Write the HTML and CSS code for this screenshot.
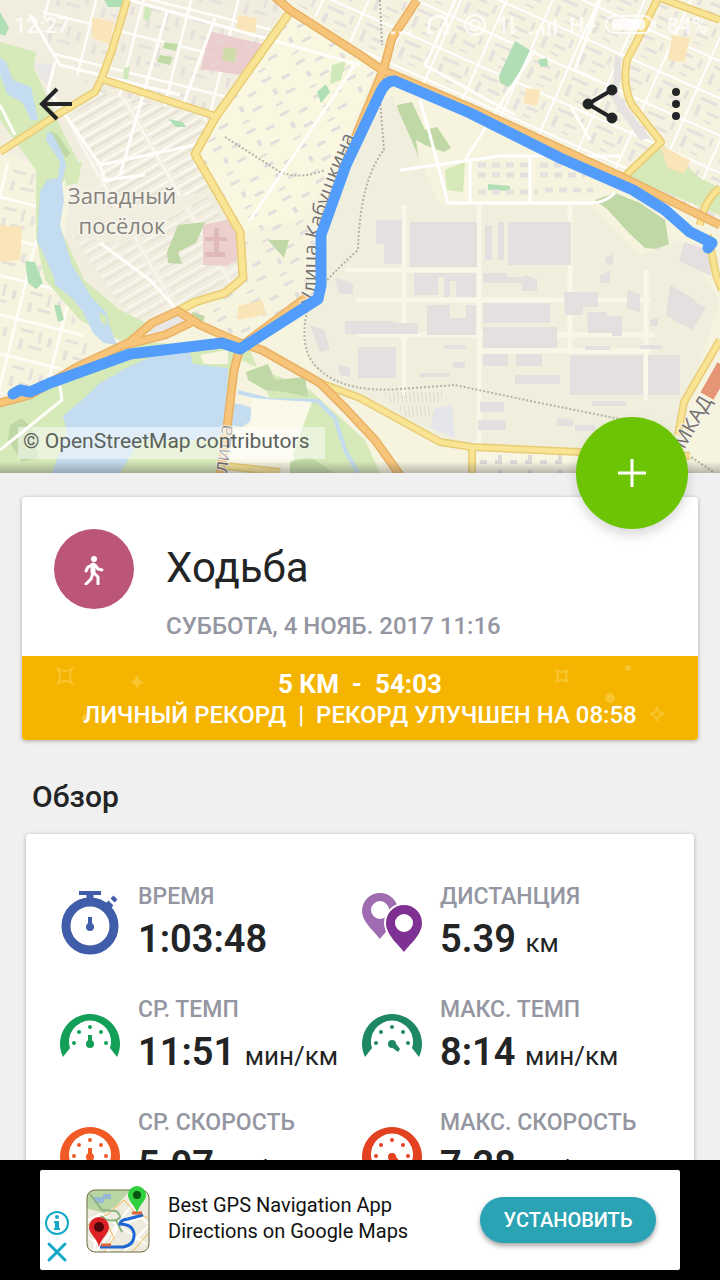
FILE: index.html
```html
<!DOCTYPE html>
<html lang="ru">
<head>
  <meta charset="UTF-8">
  <meta name="viewport" content="width=device-width, initial-scale=1.0">
  <title>Ходьба</title>
  <link rel="stylesheet" href="styles.css">
</head>
<body>
<main class="screen">
  <!-- Map with route -->
  <section class="map">
    <svg class="map-canvas" viewBox="0 0 720 473" preserveAspectRatio="xMidYMid slice" role="img" aria-label="Маршрут на карте">
      <defs>
        <pattern id="blocks" width="46" height="38" patternUnits="userSpaceOnUse" patternTransform="rotate(14)">
          <path d="M0 1H46M1 0V38" stroke="#fffefa" stroke-width="3"/>
          <path d="M8 9h13v3h-13zM27 8h3v12h-3zM9 20h4v10h-4zM19 24h14v3h-14zM37 12h4v9h-4z" fill="#e6e1da"/>
        </pattern>
        <pattern id="houses" width="38" height="38" patternUnits="userSpaceOnUse" patternTransform="rotate(-28)">
          <path d="M3 4h10v3h-10zM22 10h9v3h-9zM8 17h4v6h-4zM19 25h10v3h-10zM4 32h8v2h-8z" fill="#e2dedd"/>
        </pattern>
        <pattern id="rows" width="60" height="10" patternUnits="userSpaceOnUse" patternTransform="rotate(-30)">
          <path d="M0 1H56M58 0V10" stroke="#fbfaf4" stroke-width="2"/>
          <path d="M3 5H54" stroke="#e4e0d3" stroke-width="2"/>
        </pattern>
        <pattern id="east" width="42" height="34" patternUnits="userSpaceOnUse" patternTransform="rotate(24)">
          <path d="M0 1H42M1 0V34" stroke="#fff" stroke-width="2"/>
          <path d="M8 7h18v3h-18zM8 15h4v12h-4zM20 18h13v3h-13zM34 7h3v9h-3zM20 27h8v2h-8z" fill="#e5e1dd"/>
        </pattern>
        <linearGradient id="fade" x1="0" y1="0" x2="0" y2="1">
          <stop offset="0" stop-color="#444" stop-opacity="0"/>
          <stop offset="1" stop-color="#444" stop-opacity=".35"/>
        </linearGradient>
      </defs>

      <rect width="720" height="473" fill="#f6f4df"/>
      <path d="M0 0H290L195 154L240 232L243 278L178 311L125 345L60 300L70 180L0 150z" fill="#f1eee0"/>
      <path d="M40 0H288L215 116L96 92L50 50z" fill="url(#blocks)"/>
      <path d="M68 120L97 92L214 118L196 155L215 190L110 208z" fill="url(#rows)"/>
      <path d="M72 235L120 245L205 195L236 235L240 280L175 305L135 325z" fill="url(#rows)" opacity=".7"/>
      <path d="M290 14L375 70L330 175L300 220L245 232L197 154z" fill="#f9f7e0"/>
      <path d="M290 14L375 70L330 175L300 220L245 232L197 154z" fill="url(#houses)"/>
      <path d="M0 160L38 175L36 240L100 370L0 395z" fill="url(#blocks)"/>
      <path d="M292 0H720V220L620 175L385 66z" fill="#f5f2df"/>
      <path d="M292 0H720V220L620 175L385 66z" fill="url(#east)"/>
      <path d="M245 235L315 210L315 295L245 340L180 312L240 285z" fill="url(#houses)"/>

      <!-- Parks -->
      <g fill="#d5e9b9">
        <path d="M0 42L36 52L34 68L62 130L80 165L60 185L50 210L66 240L84 280L120 310L150 325L130 345L75 372L0 400V473H220L228 430L240 360L310 390L365 440L380 473H300L250 350L120 340L80 320L45 280L36 238L36 170L0 120z"/>
        <path d="M660 142L700 178L720 188V215L628 177z"/>
        <path d="M64 165L82 162L78 183L66 186zM445 170L465 162L463 192L447 190z"/>
      </g>
      <g fill="#bfd8a5">
        <path d="M397 105L412 102L425 130L437 127L451 148L444 152L425 145L416 140L420 166L405 168z"/>
        <path d="M178 225L205 222L196 243L178 252L182 264L168 263L167 252zM268 240L289 240L284 258z"/>
        <path d="M246 372L268 364L275 380L305 377L308 397L285 392L265 390L248 380z"/>
        <path d="M595 200L615 193L640 203L665 220L670 250L645 248L628 232L608 210z"/>
        <path d="M10 425L22 418L35 432L38 458L22 462L8 440zM290 462L310 457L335 473H290z"/>
        <path d="M50 130L58 135L70 153L66 158L56 145zM192 312L205 316L202 325L192 322z"/>
      </g>
      <g fill="#b0deb5">
        <path d="M104 0H126V7L108 7zM0 12L9 28L5 36L0 34z"/>
        <path d="M515 41L530 50L515 82L508 87L500 83L499 76z"/>
        <path d="M25 261L35 262L43 283L36 289L28 283zM317 92L326 84L330 92L321 103zM168 119L183 122L186 127L176 127zM54 305L60 305L64 320L58 322zM538 60L547 58L548 66L541 67zM488 184L510 186V191L488 190z"/>
      </g>
      <g fill="#bfdba3">
        <path d="M165 42L178 44L176 51L163 48zM160 55L173 57L170 65L157 62z"/>
      </g>
      <path d="M332 65L346 61L341 80L330 84zM145 6L152 10L148 22L143 18zM124 68L130 66L128 79L123 79z" fill="#cfe9b8"/>
      <path d="M92 17L114 22L110 44L92 38zM238 15L257 18L255 33L236 30zM672 35L690 38L684 62L668 60zM0 225L22 227L20 260L0 262zM238 306L262 300L266 314L238 320zM660 145L690 160L684 174L668 168zM526 88L540 90L537 106L524 103z" fill="#fae5b8"/>
      <path d="M209 31L262 44L247 76L201 69z" fill="#eccdcd"/>
      <path d="M209 31L262 44L247 76L201 69z" fill="url(#houses)" opacity=".4"/>
      <path d="M224 47L237 49L235 63L222 60z" fill="#cfdca9"/>
      <path d="M203 225L238 217L238 260L226 266L203 265z" fill="#ecd0cd"/>
      <path d="M205 237h22v4h-22zM214 228h5v27h-5zM205 252h20v5h-20z" fill="#e0babb"/>
      <path d="M34 63L52 64L50 85L40 78zM148 325L180 312L188 322L150 335z" fill="#e9e6e6"/>
      <path d="M615 55L622 58L618 95L650 138L640 140L612 100z" fill="#e6e2e2"/>

      <!-- Water -->
      <g fill="#c3dcf0">
        <path d="M0 58L6 62L13 80L31 87L38 120H31L23 103L7 94L0 74z"/>
        <path d="M47 132L52 133L62 152L66 165L62 183L64 200L60 225L72 265L92 298L106 312L109 325L117 345L104 343L93 333L82 310L72 298L55 285L54 277L37 240L40 192L47 180L58 178L60 162L46 140z"/>
        <path d="M130 366L152 357L190 352L193 364L228 368L225 430L214 440H140L120 473H52L67 432L63 416L82 400L100 383z"/>
        <path d="M240 404L252 408V420L242 427L228 425V403z"/>
      </g>
      <path d="M238 392L270 400L318 401L335 418L345 450L358 473" fill="none" stroke="#c3dcf0" stroke-width="4"/>
      <path d="M99 313L106 316L107 326L101 322z" fill="#d5e9b9"/>
      <path d="M200 355L228 350V364H204z" fill="#f8f6e3"/>
      <path d="M252 398L312 402L298 440L290 463H230L235 430L250 425z" fill="#faf8e8"/>

      <!-- Industrial zone -->
      <path d="M378 100L392 96L440 205L590 205L640 255L680 240L720 300L690 400L678 450L472 445L440 440L360 397L318 375L305 345L308 305L325 285L330 215z" fill="#f0efdd"/>
      <path d="M404 205V395M479 205V470M356 300H650M358 335H655M480 351H650M646 270V400M345 270H480M570 205V350" stroke="#f8f8e9" stroke-width="5" fill="none"/>
      <g fill="#e3e0df">
        <path d="M410 222h67v45h-67zM508 222h63v43h-63zM376 220h26v44h-18v-20h-8zM485 225h7v35h-7zM498 222h6v38h-6z"/>
        <path d="M414 273h62v24h-20v-16h-6v16h-6v-20h-6v18h-24zM427 305h23v13h16v-13h10v30h-49zM483 273h24v4h18v-2l12 4v12h-15v-8h-39zM483 303h67v20h-67zM483 327h74v21h-74z"/>
        <path d="M345 321h45l8 2h20v11h-73zM358 347h38v31h-38zM483 354h25v12h8v-12h26v12h-59zM515 375h45v9h-45zM570 355h73v40h-73zM648 355h32v40h-32z"/>
        <path d="M564 292h34v15h-15v8h-18zM587 312h20v4h15v20h-10v-3h-24zM640 345h22v4h-22zM585 346h25v4h-25zM592 401h34v5h-34zM684 242l25 8 2 26-32-15zM670 285l14 8 12 8-14 24-16-10zM692 300l14 8-14 22-12-8z"/>
        <path d="M480 402h24v10h-24zM478 420h28v10h-28zM444 345h22v4h-22zM420 373h30v4h-30zM453 362h12v6h-12zM335 278l10 2 8 4v10h-14zM310 325l14 5 6 20-10 2zM338 365l12 2v10l-10-2zM557 417l16 3v6h-16zM575 425h20v6h-20zM605 258l8-4v10l-6 2zM600 275l10-4v12h-9zM628 290l12 4v18l-14-4zM650 320l8-2v8h-8z"/>
      </g>
      <path d="M435 408L452 405L455 438L430 428z" fill="#e5e6ea"/>
      <path d="M385 395h60M390 400h50M400 408h30M405 414h30" stroke="#dfdece" stroke-width="6" stroke-dasharray="1 3"/>
      <path d="M478 452H690V473H478z" fill="#f8f6e3"/>
      <path d="M480 462h90M500 455v18M530 455v18M560 455v18" stroke="#dddada" stroke-width="4" stroke-dasharray="7 8"/>
      <path d="M400 170L500 156H620M430 135L448 203H590Q605 203 615 193M470 158V203M530 155V203M430 135L420 100" fill="none" stroke="#fff" stroke-width="3"/>
      <path d="M478 165h55M478 175h55M540 165h60M540 175h45M478 192h60M545 190h48" stroke="#e4e0dd" stroke-width="5" stroke-dasharray="8 6"/>

      <!-- Railways and minor streets -->
      <g fill="none" stroke="#b4b2a8" stroke-width="2" stroke-dasharray="2 2">
        <path d="M225 137L280 172Q300 180 325 170M380 100L384 150Q360 180 358 250Q330 275 310 300Q295 350 320 370Q345 393 400 389L455 385L540 403L625 420M688 455L715 473M380 0L382 45"/>
      </g>
      <g fill="none" stroke="#fffefa" stroke-width="3">
        <path d="M30 15L60 65L180 95M55 62L48 90L100 165L105 180L145 175M130 0L360 65M215 18L183 105M167 12L120 175M355 65L250 220M100 165L195 145M0 105L15 135M100 243L150 280L178 311M60 386L62 400L0 450M455 0L425 65L515 115M535 50L465 160M600 0L575 70L640 100M590 140L570 105"/>
      </g>

      <!-- Main roads -->
      <g fill="none" stroke-linejoin="round">
        <g stroke="#e8cc76" stroke-width="8">
          <path d="M127 0L112 50L101 80L95 92L60 113L0 152M102 79L215 116"/>
          <path d="M290 12L215 118L195 154L240 232L243 278L225 293L195 302L178 311" stroke-width="9"/>
          <path d="M320 383L360 398L440 442L472 447L580 452L690 456M472 447V473"/>
          <path d="M657 0L640 35L627 60Q622 85 632 105L661 142L625 176M660 -2L720 20M720 188Q704 200 700 225M708 235L716 275L722 290M720 340L684 402L678 435M225 466L280 472"/>
        </g>
        <g stroke="#f9e494" stroke-width="5">
          <path d="M127 0L112 50L101 80L95 92L60 113L0 152M102 79L215 116"/>
          <path d="M290 12L215 118L195 154L240 232L243 278L225 293L195 302L178 311" stroke-width="6"/>
          <path d="M320 383L360 398L440 442L472 447L580 452L690 456M472 447V473"/>
          <path d="M657 0L640 35L627 60Q622 85 632 105L661 142L625 176M660 -2L720 20M720 188Q704 200 700 225M708 235L716 275L722 290M720 340L684 402L678 435M225 466L280 472"/>
        </g>
        <g stroke="#e9b164" stroke-width="9">
          <path d="M273 -5L290 10L360 55L382 70L480 112L620 176L720 225M417 0L392 38L384 68L350 150L322 225M-4 404L30 395L75 368L130 342L152 323L178 311L200 325L240 343L262 350L320 383L345 408L375 440L400 475M125 345L165 335L192 322M308 296L240 347L234 370L228 420L220 475"/>
        </g>
        <g stroke="#f7c57a" stroke-width="6">
          <path d="M273 -5L290 10L360 55L382 70L480 112L620 176L720 225M417 0L392 38L384 68L350 150L322 225M-4 404L30 395L75 368L130 342L152 323L178 311L200 325L240 343L262 350L320 383L345 408L375 440L400 475M125 345L165 335L192 322M308 296L240 347L234 370L228 420L220 475"/>
        </g>
        <path d="M724 366L707 396" stroke="#e69677" stroke-width="15"/>
      </g>

      <!-- Place names -->
      <path id="street" d="M315 305C318 280 315 255 320 234C327 205 342 165 362 122" fill="none"/>
      <path id="street-south" d="M227 473L234 418" fill="none"/>
      <g class="map-label">
        <text x="122" y="204" text-anchor="middle">Западный</text>
        <text x="122" y="234" text-anchor="middle">посёлок</text>
      </g>
      <g class="map-street">
        <text><textPath href="#street">Улица Кабушкина</textPath></text>
        <text><textPath href="#street-south">лица</textPath></text>
        <text transform="translate(684 450) rotate(-60)">МКАД</text>
      </g>

      <path d="M13 394L20 390L30 392L50 383L130 354L222 343L240 349L318 299L321 285V235L346 165L380 93Q386 80 395 81L470 113L560 158L633 190L665 210L690 232L712 243L708 248" fill="none" stroke="#529dfb" stroke-width="11" stroke-linejoin="round" stroke-linecap="round"/>
      <rect y="461" width="720" height="12" fill="url(#fade)"/>
    </svg>

    <div class="status-bar">
      <span>12:27</span>
      <span class="status-icons">
        <svg width="172" height="24" viewBox="0 0 172 24" fill="none" stroke="#fff" stroke-width="3" aria-hidden="true">
          <path d="M2 20h4M10 20h4M18 20h4"/>
          <path d="M40 20V12a9 9 0 0 1 18 0V20M38 20h6M54 20h6"/>
          <circle cx="86" cy="12" r="10" stroke-width="2"/>
          <circle cx="86" cy="12" r="5" stroke-width="2"/>
          <path d="M115 4V21M123 3V21M110 9l5-5M128 16l-5 5" stroke-width="2"/>
          <path d="M142 22V19M148 22V17M154 22V14M160 22V10M166 22V6"/>
        </svg>
        <span>H+</span>
        <svg width="54" height="20" viewBox="0 0 54 20" aria-hidden="true">
          <rect x="1" y="1" width="46" height="17" rx="8" fill="none" stroke="#fff" stroke-width="2"/>
          <rect x="7" y="4" width="33" height="11" rx="4" fill="#fff"/>
          <path d="M50 6v8" stroke="#fff" stroke-width="2"/>
        </svg>
        <span>84%</span>
      </span>
    </div>

    <nav class="toolbar">
      <button class="icon-btn" aria-label="Назад">
        <svg width="36" height="36" viewBox="0 0 36 36" fill="none" stroke="#222425" stroke-width="4">
          <path d="M34 18H5M19 3L4 18L19 33"/>
        </svg>
      </button>
      <span class="spacer"></span>
      <button class="icon-btn" aria-label="Поделиться">
        <svg width="40" height="40" viewBox="0 0 40 40" fill="#222425" stroke="#222425">
          <path d="M32 6L8 20L32 34" fill="none" stroke-width="4"/>
          <circle cx="32" cy="6" r="5"/><circle cx="8" cy="20" r="5"/><circle cx="32" cy="34" r="5"/>
        </svg>
      </button>
      <button class="icon-btn" aria-label="Ещё">
        <svg width="40" height="40" viewBox="0 0 40 40" fill="#222425">
          <circle cx="20" cy="8" r="4"/><circle cx="20" cy="20" r="4"/><circle cx="20" cy="32" r="4"/>
        </svg>
      </button>
    </nav>

    <span class="attribution">© OpenStreetMap contributors</span>

    <button class="fab" aria-label="Добавить">
      <svg width="28" height="28" viewBox="0 0 28 28" stroke="#fff" stroke-width="3">
        <path d="M0 14H28M14 0V28"/>
      </svg>
    </button>
  </section>

  <!-- Workout summary -->
  <article class="card summary">
    <div class="summary-head">
      <span class="sport">
        <svg width="32" height="32" viewBox="0 0 32 32" fill="none" stroke="#fff" stroke-width="3" stroke-linecap="round" stroke-linejoin="round" aria-hidden="true">
          <circle cx="16" cy="6" r="3" fill="#fff" stroke="none"/>
          <path d="M14 12L10 14L8 18M17 12L20 16L24 17"/>
          <path d="M15 12V19" stroke-width="5"/>
          <path d="M15 20L13 26L8 31M16 20L20 24L20 31"/>
        </svg>
      </span>
      <div>
        <h1>Ходьба</h1>
        <p class="date">СУББОТА, 4 НОЯБ. 2017 11:16</p>
      </div>
    </div>
    <div class="record">
      <svg class="sparkles" viewBox="0 0 676 84" preserveAspectRatio="none" fill="none" stroke="#fbd04f" stroke-width="2" aria-hidden="true">
        <path d="M36 13q7 4 14 0q-4 7 0 14q-7-4-14 0q4-7 0-14zM534 14q6 4 12 0q-4 6 0 12q-6-4-12 0q4-6 0-12z"/>
        <path d="M115 18q1 7 8 8q-7 1-8 8q-1-7-8-8q7-1 8-8z" fill="#fbd04f" stroke="none"/>
        <path d="M635 51q1 6 7 7q-6 1-7 7q-1-6-7-7q6-1 7-7z"/>
        <g fill="#fbd04f" stroke="none"><circle cx="588" cy="42" r="5"/><circle cx="606" cy="12" r="3"/><circle cx="64" cy="62" r="4"/></g>
      </svg>
      <strong>5 КМ&nbsp; -&nbsp; 54:03</strong>
      <span>ЛИЧНЫЙ РЕКОРД&nbsp; |&nbsp; РЕКОРД УЛУЧШЕН НА 08:58</span>
    </div>
  </article>

  <!-- Overview -->
  <h2>Обзор</h2>
  <section class="card stats">
    <div class="stat">
      <svg class="stat-icon" viewBox="0 0 64 64" fill="none" stroke="#405da9" aria-hidden="true">
        <circle cx="32" cy="35" r="24" stroke-width="9"/>
        <path d="M21 2H43" stroke-width="4"/>
        <path d="M32 1V12" stroke-width="7"/>
        <path d="M48 17L53 12" stroke-width="7"/>
        <path d="M54 6L58 10" stroke-width="4"/>
        <path d="M32 26V36" stroke-width="4"/>
        <circle cx="32" cy="36" r="4" fill="#405da9" stroke="none"/>
      </svg>
      <div>
        <div class="stat-label">ВРЕМЯ</div>
        <div class="stat-value">1:03:48</div>
      </div>
    </div>
    <div class="stat">
      <svg class="stat-icon" viewBox="0 0 64 64" fill-rule="evenodd" aria-hidden="true">
        <path d="M20 48C15 41 2 31 2 20A18 18 0 0 1 38 20C38 31 25 41 20 48zM20 10A9 9 0 1 0 20 28A9 9 0 1 0 20 10z" fill="#9f6cb1"/>
        <path d="M44 61C39 54 26 44 26 32A18 18 0 0 1 62 32C62 44 49 54 44 61z" fill="#fff" stroke="#fff" stroke-width="4"/>
        <path d="M44 61C39 54 26 44 26 32A18 18 0 0 1 62 32C62 44 49 54 44 61zM44 23A9 9 0 1 0 44 41A9 9 0 1 0 44 23z" fill="#7f3193"/>
      </svg>
      <div>
        <div class="stat-label">ДИСТАНЦИЯ</div>
        <div class="stat-value">5.39 <small>км</small></div>
      </div>
    </div>
    <div class="stat">
      <svg class="stat-icon gauge-avg-pace" viewBox="0 0 64 64" fill="currentColor" aria-hidden="true">
        <path d="M5 53A30 30 0 1 1 59 53L52 44A21 21 0 1 0 12 44z"/>
        <circle cx="16" cy="39" r="2"/><circle cx="21" cy="28" r="2"/><circle cx="32" cy="23" r="2"/><circle cx="43" cy="28" r="2"/><circle cx="48" cy="39" r="2"/>
        <circle cx="32" cy="40" r="4"/><path d="M30 31h4v9h-4z"/>
      </svg>
      <div>
        <div class="stat-label">СР. ТЕМП</div>
        <div class="stat-value">11:51 <small>мин/км</small></div>
      </div>
    </div>
    <div class="stat">
      <svg class="stat-icon gauge-max-pace" viewBox="0 0 64 64" fill="currentColor" aria-hidden="true">
        <path d="M5 53A30 30 0 1 1 59 53L52 44A21 21 0 1 0 12 44z"/>
        <circle cx="16" cy="39" r="2"/><circle cx="21" cy="28" r="2"/><circle cx="32" cy="23" r="2"/><circle cx="43" cy="28" r="2"/><circle cx="48" cy="39" r="2"/>
        <circle cx="32" cy="40" r="4"/><path d="M34 37l6 8l-2 3l-8-6z"/>
      </svg>
      <div>
        <div class="stat-label">МАКС. ТЕМП</div>
        <div class="stat-value">8:14 <small>мин/км</small></div>
      </div>
    </div>
    <div class="stat">
      <svg class="stat-icon gauge-avg-speed" viewBox="0 0 64 64" fill="currentColor" aria-hidden="true">
        <path d="M5 53A30 30 0 1 1 59 53L52 44A21 21 0 1 0 12 44z"/>
        <circle cx="16" cy="39" r="2"/><circle cx="21" cy="28" r="2"/><circle cx="32" cy="23" r="2"/><circle cx="43" cy="28" r="2"/><circle cx="48" cy="39" r="2"/>
        <circle cx="32" cy="40" r="4"/><path d="M30 31h4v9h-4z"/>
      </svg>
      <div>
        <div class="stat-label">СР. СКОРОСТЬ</div>
        <div class="stat-value">5.07 <small>км/ч</small></div>
      </div>
    </div>
    <div class="stat">
      <svg class="stat-icon gauge-max-speed" viewBox="0 0 64 64" fill="currentColor" aria-hidden="true">
        <path d="M5 53A30 30 0 1 1 59 53L52 44A21 21 0 1 0 12 44z"/>
        <circle cx="16" cy="39" r="2"/><circle cx="21" cy="28" r="2"/><circle cx="32" cy="23" r="2"/><circle cx="43" cy="28" r="2"/><circle cx="48" cy="39" r="2"/>
        <circle cx="32" cy="40" r="4"/><path d="M34 37l6 8l-2 3l-8-6z"/>
      </svg>
      <div>
        <div class="stat-label">МАКС. СКОРОСТЬ</div>
        <div class="stat-value">7.28 <small>км/ч</small></div>
      </div>
    </div>
  </section>
</main>

<!-- Ad banner -->
<aside class="ad">
  <div class="ad-body">
    <div class="ad-controls">
      <button class="icon-btn" aria-label="Об объявлении">
        <svg width="26" height="26" viewBox="0 0 26 26" fill="none" stroke="#13a9c6" stroke-width="2">
          <circle cx="13" cy="13" r="11"/>
          <circle cx="13" cy="7" r="2" fill="#13a9c6" stroke="none"/>
          <path d="M10 12H13M10 19H16" stroke-width="2"/>
          <path d="M13 11V20" stroke-width="4"/>
        </svg>
      </button>
      <button class="icon-btn" aria-label="Закрыть">
        <svg width="26" height="26" viewBox="0 0 26 26" stroke="#13a9c6" stroke-width="3" stroke-linecap="round">
          <path d="M5 5L21 21M21 5L5 21"/>
        </svg>
      </button>
    </div>
    <svg class="ad-icon" width="64" height="68" viewBox="0 0 64 68" aria-hidden="true">
      <defs>
        <clipPath id="tile"><rect x="1" y="4" width="62" height="62" rx="8"/></clipPath>
      </defs>
      <g clip-path="url(#tile)" fill="none">
        <rect width="64" height="68" fill="#eeeadd"/>
        <path d="M0 0H48L30 20L18 27L0 22z" fill="#b9d5a2"/>
        <path d="M8 11h10v6H8zM17 8h8v5h-8z" fill="#94b8d6"/>
        <path d="M0 35L15 28L60 58M10 66L45 20L62 38M20 66L32 40L60 30M38 66L62 40M0 50L25 66M12 30L8 66" stroke="#fff" stroke-width="2"/>
        <path d="M0 40L22 28L38 14L48 25L62 32M20 35L28 52L18 66M46 66L62 48" stroke="#f2b84c" stroke-width="1"/>
        <path d="M4 8L16 24L30 25Q38 32 30 34Q22 36 15 30M30 34L36 46" stroke="#8db584" stroke-width="2"/>
        <path d="M14 61H37Q49 59 48 47Q46 38 34 38Q34 34 42 33L57 29" stroke="#1c67d2" stroke-width="3"/>
        <path d="M46 27h10M15 59h10" stroke="#d9653b" stroke-width="3"/>
      </g>
      <rect x="1" y="4" width="62" height="62" rx="8" fill="none" stroke="#6d6a3c" stroke-width="1"/>
      <path d="M51 27C49 19 42 15 42 9A9 9 0 0 1 60 9C60 15 53 19 51 27z" fill="#2fd03d"/>
      <circle cx="51" cy="9" r="4" fill="#075310"/>
      <path d="M13 61C11 52 3 48 3 41A10 10 0 0 1 23 41C23 48 15 52 13 61z" fill="#dd2025"/>
      <circle cx="13" cy="41" r="5" fill="#51080b"/>
    </svg>
    <p class="ad-text">Best GPS Navigation App<br>Directions on Google Maps</p>
    <button class="install">УСТАНОВИТЬ</button>
  </div>
</aside>
</body>
</html>
```
FILE: styles.css
```css
* {
  box-sizing: border-box;
}
body {
  margin: 0;
  height: 100vh;
  display: flex;
  flex-direction: column;
  background: #f0f0f0;
  color: #222425;
  font-family: Roboto, "Noto Sans", sans-serif;
}
button {
  border: none;
  cursor: pointer;
  font-family: inherit;
}
h1, h2, p {
  margin: 0;
}
svg {
  display: block;
}
.screen {
  flex: 1;
  min-height: 0;
  overflow: hidden;
}

/* Map */
.map {
  position: relative;
}
.map-canvas {
  width: 100%;
  height: auto;
}
.map-label {
  font-family: "Open Sans", sans-serif;
  font-size: 22px;
  font-weight: 500;
  fill: #85827d;
  stroke: #f6f4ea;
  stroke-width: 3px;
  paint-order: stroke;
}
.map-street {
  font-family: "Open Sans", sans-serif;
  font-size: 20px;
  font-weight: 500;
  fill: #74706c;
  stroke: #f6f4ea;
  stroke-width: 2px;
  paint-order: stroke;
}
.status-bar {
  position: absolute;
  top: 0;
  left: 0;
  right: 0;
  height: 50px;
  padding: 0 12px 0 14px;
  display: flex;
  align-items: center;
  justify-content: space-between;
  color: #fff;
  font-size: 22px;
  font-weight: 500;
  opacity: 0.8;
}
.status-icons {
  display: flex;
  align-items: center;
  gap: 8px;
}
.toolbar {
  position: absolute;
  top: 80px;
  left: 0;
  right: 0;
  padding: 0 24px 0 38px;
  display: flex;
  align-items: center;
}
.spacer {
  flex: 1;
}
.icon-btn {
  padding: 0;
  background: none;
}
.toolbar .icon-btn {
  height: 48px;
}
.toolbar .icon-btn:last-child {
  margin-left: 36px;
}
.attribution {
  position: absolute;
  left: 18px;
  bottom: 14px;
  padding: 0 16px 4px 5px;
  background: rgba(255, 255, 255, 0.5);
  color: #5c625c;
  font-size: 21px;
  line-height: 28px;
}
.fab {
  position: absolute;
  right: 32px;
  bottom: -56px;
  width: 112px;
  height: 112px;
  display: flex;
  align-items: center;
  justify-content: center;
  border-radius: 50%;
  background: #6cc405;
  box-shadow: 0 6px 12px rgba(0, 0, 0, 0.15);
}

/* Cards */
.card {
  background: #fff;
  border-radius: 4px;
  box-shadow: 0 1px 4px rgba(0, 0, 0, 0.3);
}
.summary {
  margin: 24px 22px 0;
  overflow: hidden;
}
.summary-head {
  display: flex;
  gap: 32px;
  padding: 32px 32px 11px;
}
.sport {
  width: 80px;
  height: 80px;
  display: flex;
  align-items: center;
  justify-content: center;
  border-radius: 50%;
  background: #bb5678;
}
h1 {
  font-size: 42px;
  font-weight: 400;
  line-height: 78px;
}
.date {
  color: #9496a1;
  font-size: 24px;
  font-weight: 500;
  line-height: 38px;
}
.record {
  position: relative;
  padding: 13px 0 9px;
  background: #f5b400;
  color: #fff;
  font-size: 24px;
  font-weight: 500;
  line-height: 31px;
  text-align: center;
}
.record strong, .record span {
  position: relative;
  display: block;
}
.record strong {
  font-size: 26px;
  font-weight: 700;
}
.sparkles {
  position: absolute;
  inset: 0;
  width: 100%;
  height: 100%;
  opacity: 0.6;
}
h2 {
  margin: 40px 32px 20px;
  font-size: 30px;
  font-weight: 500;
  line-height: 34px;
}

/* Stats */
.stats {
  margin: 0 26px;
  padding: 49px 32px;
  display: grid;
  grid-template-columns: 1fr 1fr;
  row-gap: 33px;
}
.stat {
  display: flex;
  align-items: center;
  gap: 16px;
  white-space: nowrap;
}
.stat-icon {
  width: 64px;
  height: 64px;
}
.stat-label {
  color: #9496a1;
  font-size: 23px;
  font-weight: 500;
  line-height: 28px;
}
.stat-value {
  margin-top: 4px;
  font-size: 38px;
  font-weight: 600;
  line-height: 48px;
}
.stat-value small {
  font-size: 26px;
  font-weight: 400;
  line-height: 1;
}
.gauge-avg-pace {
  color: #139f58;
}
.gauge-max-pace {
  color: #1d8863;
}
.gauge-avg-speed {
  color: #f15a24;
}
.gauge-max-speed {
  color: #e2421f;
}

/* Ad */
.ad {
  padding: 10px 40px;
  background: #000;
}
.ad-body {
  height: 100px;
  padding: 0 24px 0 4px;
  display: flex;
  align-items: center;
  background: #fff;
  border-radius: 2px;
}
.ad-controls {
  align-self: flex-end;
  display: flex;
  flex-direction: column;
  gap: 3px;
  margin-bottom: 5px;
}
.ad-icon {
  margin-left: 16px;
}
.ad-text {
  flex: 1;
  margin-left: 18px;
  padding-bottom: 4px;
  color: #111;
  font-size: 20px;
  line-height: 26px;
}
.install {
  width: 176px;
  height: 46px;
  border-radius: 23px;
  background: #2aa4b5;
  box-shadow: 0 3px 5px rgba(0, 0, 0, 0.35);
  color: #fff;
  font-size: 20px;
  font-weight: 500;
}
```
